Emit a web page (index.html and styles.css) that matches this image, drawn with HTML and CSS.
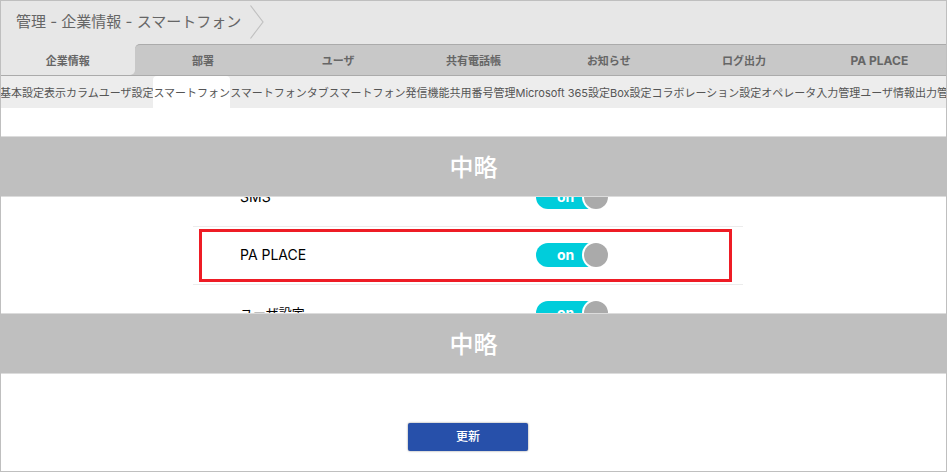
FILE: index.html
```html
<!DOCTYPE html>
<html lang="ja">
<head>
    <meta charset="UTF-8">
    <meta name="viewport" content="width=device-width, initial-scale=1.0">
    <title>管理 - 企業情報 - スマートフォン</title>
    <link rel="stylesheet" href="styles.css">
</head>
<body>
    <div class="page">
        <header class="header">
            <h1>管理 - 企業情報 - スマートフォン</h1>
            <svg class="arrow" width="16" height="36" viewBox="0 0 16 36" aria-hidden="true">
                <path d="M1.500 1.500L14 18L1.500 34.500" fill="none" stroke="#c0c0c0" stroke-width="1.200"/>
            </svg>
        </header>

        <nav class="tabs">
            <div class="tab active"><a href="#">企業情報</a></div>
            <div class="tab"><a href="#">部署</a></div>
            <div class="tab"><a href="#">ユーザ</a></div>
            <div class="tab"><a href="#">共有電話帳</a></div>
            <div class="tab"><a href="#">お知らせ</a></div>
            <div class="tab"><a href="#">ログ出力</a></div>
            <div class="tab latin"><a href="#">PA PLACE</a></div>
        </nav>

        <nav class="subtabs">
            <a href="#">基本設定</a>
            <a href="#">表示カラム</a>
            <a href="#">ユーザ設定</a>
            <a href="#" class="current">スマートフォン</a>
            <a href="#">スマートフォンタブ</a>
            <a href="#">スマートフォン発信機能</a>
            <a href="#">共用番号管理</a>
            <a href="#">Microsoft 365設定</a>
            <a href="#">Box設定</a>
            <a href="#">コラボレーション設定</a>
            <a href="#">オペレータ入力管理</a>
            <a href="#">ユーザ情報出力管理</a>
        </nav>

        <form class="settings">
            <div class="omitted">中略</div>

            <div class="rows">
                <div class="row">
                    <label class="name" for="sms">SMS</label>
                    <label class="switch">
                        <input type="checkbox" id="sms" checked>
                        <span class="state">on</span>
                    </label>
                </div>
                <div class="row marked">
                    <label class="name" for="paPlace">PA PLACE</label>
                    <label class="switch">
                        <input type="checkbox" id="paPlace" checked>
                        <span class="state">on</span>
                    </label>
                </div>
                <div class="row">
                    <label class="name kana" for="userSetting">ユーザ設定</label>
                    <label class="switch">
                        <input type="checkbox" id="userSetting" checked>
                        <span class="state">on</span>
                    </label>
                </div>
            </div>

            <div class="omitted">中略</div>

            <div class="actions">
                <button type="button">更新</button>
            </div>
        </form>
    </div>
</body>
</html>
```

FILE: styles.css
```css
* {
    margin: 0;
    padding: 0;
    box-sizing: border-box;
}

body {
    font-family: Inter, 'Noto Sans CJK JP', sans-serif;
    background: #fff;
    color: #000;
}

a {
    color: inherit;
    text-decoration: none;
}

.page {
    min-height: 100vh;
    overflow: hidden;
    outline: 1px solid #bfbfbf;
    outline-offset: -1px;
}

.header {
    display: flex;
    align-items: center;
    gap: 8px;
    height: 44px;
    padding: 0 16px;
    background: #e7e7e7;
}

h1 {
    font-size: 15px;
    font-weight: 400;
    line-height: 24px;
    color: #666;
}

/* main tabs */
.tabs {
    display: flex;
    height: 32px;
    background: #e7e7e7;
    border-bottom: 1px solid #ababab;
}

.tab {
    flex: 1;
    display: flex;
    background: #c8c8c8;
    border-top: 1px solid #ababab;
    font-size: 11px;
    font-weight: 700;
    color: #666;
}

.tab.latin {
    font-size: 12px;
}

.tab a {
    flex: 1;
    display: flex;
    justify-content: center;
    align-items: center;
}

.tab.active {
    border-top: none;
}

.tab.active a {
    background: #e7e7e7;
    border-bottom-right-radius: 5px;
}

.tab.active + .tab {
    border-top-left-radius: 5px;
}

/* sub tabs */
.subtabs {
    display: flex;
    height: 32px;
    background: #ededed;
    font-size: 11px;
    color: #555;
    overflow: hidden;
}

.subtabs a {
    flex: none;
    line-height: 34px;
    white-space: nowrap;
}

.subtabs .current {
    background: #fff;
    border-radius: 4px 4px 0 0;
}

/* settings */
.settings {
    padding-top: 28px;
}

.omitted {
    height: 61px;
    background: #bfbfbf;
    border-top: 1px solid #dcdcdc;
    border-bottom: 1px solid #dcdcdc;
    color: #fff;
    font-size: 24px;
    font-weight: 500;
    line-height: 61px;
    text-align: center;
}

/* only the middle of the list is left visible between the two bands */
.rows {
    display: flex;
    flex-direction: column;
    justify-content: center;
    align-items: center;
    height: 116px;
    padding-right: 11px;
    overflow: hidden;
}

.row {
    position: relative;
    flex: none;
    display: flex;
    align-items: center;
    width: 100%;
    max-width: 550px;
    height: 58px;
    padding: 0 0 2px 47px;
    border-top: 1px solid #ececec;
    font-size: 14px;
}

.row.marked::after {
    content: "";
    position: absolute;
    top: 2px;
    right: 11px;
    bottom: 2px;
    left: 6px;
    border: 3px solid #ee1c25;
    pointer-events: none;
}

.name {
    width: 296px;
}

.name.kana {
    font-size: 13px;
}

.switch {
    position: relative;
    display: flex;
    align-items: center;
    width: 72px;
    height: 24px;
    padding-left: 21px;
    background: #00cddb;
    border-radius: 12px;
    color: #fff;
    font-weight: 700;
    line-height: 24px;
    cursor: pointer;
}

.switch input {
    position: absolute;
    opacity: 0;
}

.switch::after {
    content: "";
    position: absolute;
    top: 0;
    right: 0;
    width: 24px;
    height: 24px;
    border-radius: 50%;
    background: #aaa;
    box-shadow: 0 0 0 2px #fff;
}

.actions {
    display: flex;
    justify-content: center;
    padding: 49px 11px 20px 0;
}

button {
    width: 120px;
    height: 28px;
    background: #2750aa;
    border: none;
    border-radius: 2px;
    box-shadow: 0 0 2px rgba(0, 0, 0, 0.5);
    color: #fff;
    font-family: inherit;
    font-size: 12px;
    font-weight: 500;
    line-height: 28px;
    cursor: pointer;
}
```
